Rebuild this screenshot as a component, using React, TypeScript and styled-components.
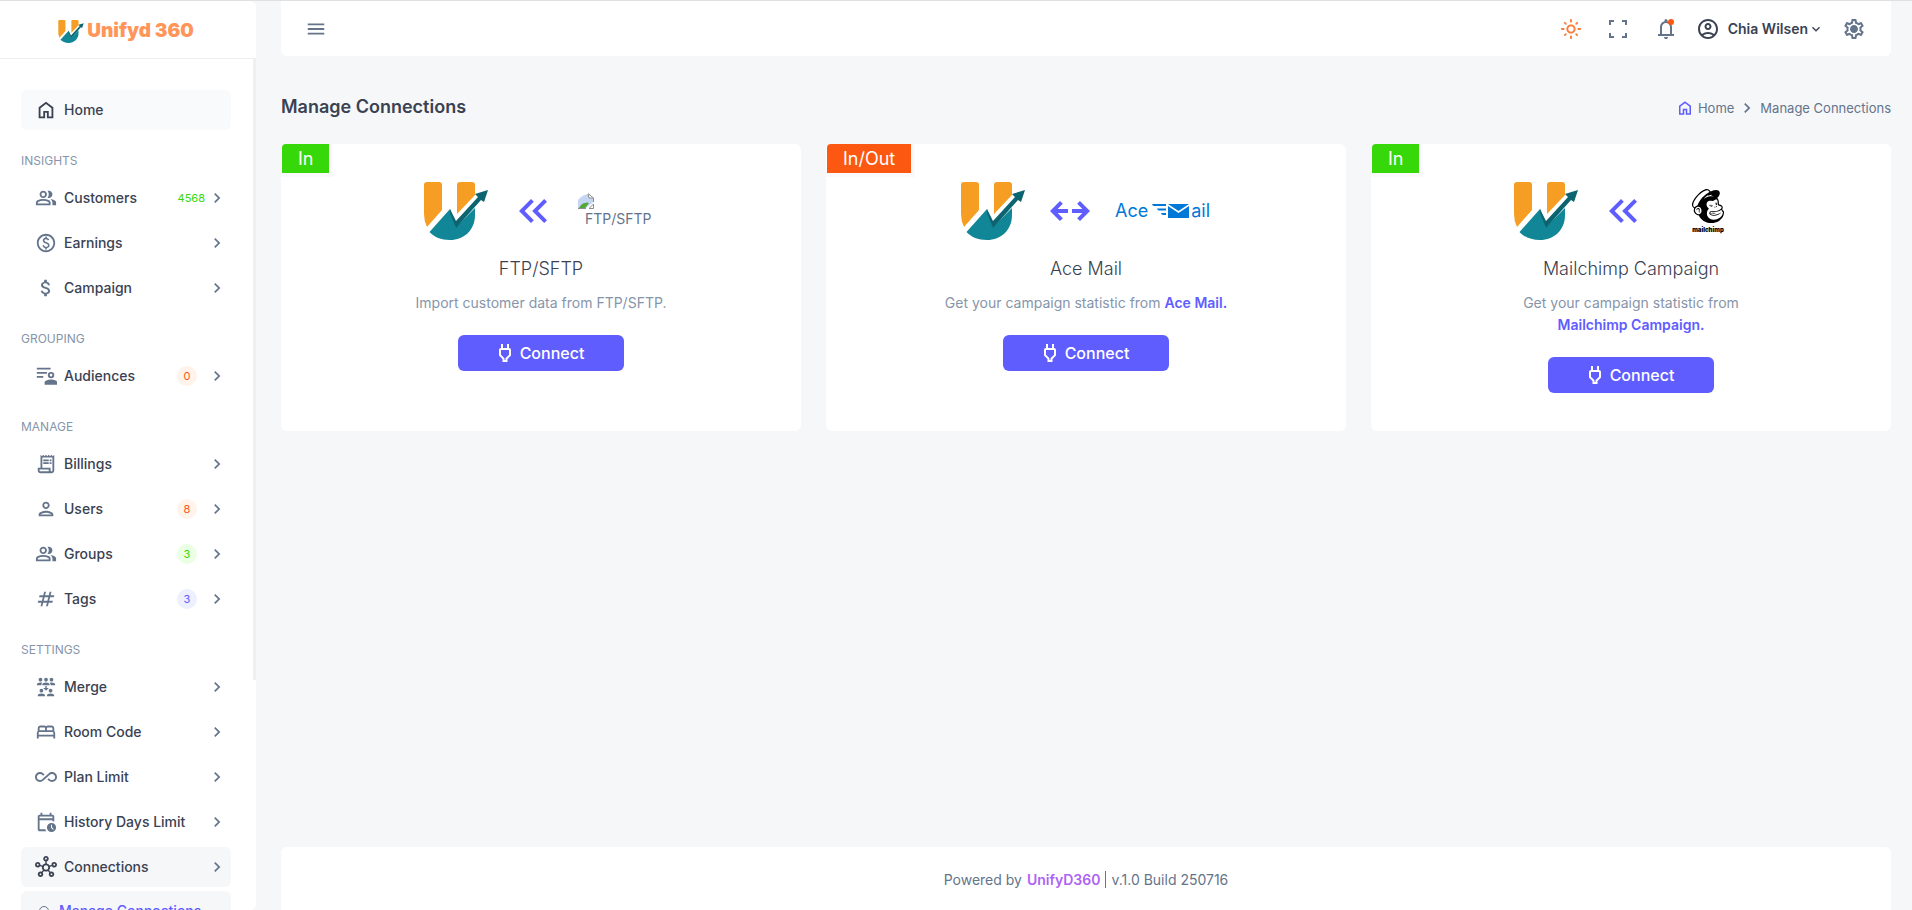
import React from 'react';
import styled, { createGlobalStyle } from 'styled-components';
import {
  MdAllInclusive,
  MdAttachMoney,
  MdChevronRight,
  MdKeyboardArrowDown,
  MdKeyboardDoubleArrowLeft,
  MdMenu,
  MdNumbers,
  MdOutlineAccountCircle,
  MdOutlineBed,
  MdOutlineHub,
  MdOutlineLightMode,
  MdOutlinePaid,
  MdOutlinePerson,
  MdOutlinePower,
  MdOutlineReceiptLong,
  MdOutlineSettings,
  MdReduceCapacity,
} from 'react-icons/md';
import { SiMailchimp } from 'react-icons/si';

const color = {
  ink: '#3a4252',
  body: '#64748b',
  muted: '#8695aa',
  page: '#f6f7f9',
  line: '#eceef2',
  primary: '#605dff',
  green: '#37d80a',
  orange: '#fd5812',
  purple: '#ad63f6',
};

const GlobalStyle = createGlobalStyle`
  *, *::before, *::after { box-sizing: border-box; }
  body {
    margin: 0;
    background: ${color.page};
    color: ${color.body};
    font-family: Inter, "Liberation Sans", sans-serif;
    font-size: 14px;
    line-height: 22px;
  }
  a { color: inherit; text-decoration: none; }
  button { font: inherit; color: inherit; border: 0; background: none; padding: 0; cursor: pointer; }
  h1, h2, p, ul, ol { margin: 0; padding: 0; }
  ul, ol { list-style: none; }
  svg { display: block; flex: none; }
`;

const Page = styled.div`
  display: grid;
  grid-template-columns: 256px minmax(0, 1fr);
  height: 100vh;
  overflow: hidden;
  border-top: 1px solid #dfe0e2;
`;

const Sidebar = styled.aside`
  display: flex;
  flex-direction: column;
  min-height: 0;
  background: #fff;
  border-radius: 0 6px 6px 0;
`;

const Brand = styled.a`
  display: flex;
  align-items: center;
  justify-content: center;
  gap: 3px;
  flex: none;
  height: 58px;
  padding-top: 3px;
  padding-right: 4px;
  border-bottom: 1px solid ${color.line};
`;

const BrandName = styled.span`
  color: #ff9558;
  font-size: 19px;
  font-weight: 900;
`;

const NavArea = styled.div`
  position: relative;
  flex: 1;
  min-height: 0;
  overflow: hidden;
`;

const ScrollThumb = styled.div`
  position: absolute;
  top: 0;
  right: 0;
  width: 3px;
  height: 73%;
  background: #eff0f2;
`;

const Nav = styled.nav`
  padding: 31px 25px 0 21px;
`;

const NavList = styled.ul`
  display: flex;
  flex-direction: column;
  gap: 5px;
`;

const NavHeading = styled.h2`
  margin: 22px 0 8px;
  color: ${color.muted};
  font-size: 12px;
  line-height: 18px;
  font-weight: 400;
  text-transform: uppercase;
`;

const NavLink = styled.a<{ $fill?: string }>`
  display: flex;
  align-items: center;
  height: 40px;
  padding: 0 4px 0 14px;
  border-radius: 6px;
  background: ${(p) => p.$fill ?? 'transparent'};
  color: ${color.ink};
  font-weight: 500;
`;

const NavIcon = styled.span<{ $dark?: boolean }>`
  display: flex;
  width: 22px;
  margin-right: 7px;
  color: ${(p) => (p.$dark ? color.ink : color.body)};
`;

const NavLabel = styled.span`
  flex: 1;
`;

const Badge = styled.span<{ $tone: string; $tint: string }>`
  min-width: 20px;
  height: 20px;
  margin-right: 10px;
  border-radius: 10px;
  background: ${(p) => p.$tint};
  color: ${(p) => p.$tone};
  font-size: 11px;
  line-height: 20px;
  font-weight: 400;
  text-align: center;
`;

const WideBadge = styled(Badge)`
  margin-right: 2px;
`;

const SubLink = styled(NavLink)`
  padding-left: 18px;
  margin-top: 4px;
  color: ${color.primary};
`;

const Bullet = styled.span`
  width: 10px;
  height: 10px;
  margin-right: 10px;
  border: 1px solid ${color.body};
  border-radius: 50%;
`;

const Content = styled.div`
  display: flex;
  flex-direction: column;
  min-height: 0;
  padding: 0 21px 0 25px;
`;

const TopBar = styled.header`
  display: flex;
  align-items: center;
  justify-content: space-between;
  height: 55px;
  padding: 0 25px 0 24px;
  background: #fff;
  border-radius: 0 0 6px 6px;
`;

const TopActions = styled.div`
  display: flex;
  align-items: center;
  gap: 18px;
`;

const TopIcons = styled.div`
  display: flex;
  align-items: center;
  gap: 24px;
`;

const IconButton = styled.button<{ $tone?: string }>`
  position: relative;
  display: flex;
  color: ${(p) => p.$tone ?? color.body};
`;

const Dot = styled.span`
  position: absolute;
  top: 2px;
  right: 4px;
  width: 6px;
  height: 6px;
  border-radius: 50%;
  background: ${color.orange};
`;

const Profile = styled.button`
  display: flex;
  align-items: center;
  color: ${color.ink};
  font-weight: 600;
`;

const ProfileName = styled.span`
  margin-left: 8px;
`;

const PageHead = styled.div`
  display: flex;
  align-items: center;
  justify-content: space-between;
  margin: 38px 0 24px;
`;

const Title = styled.h1`
  color: ${color.ink};
  font-size: 18px;
  line-height: 26px;
  font-weight: 600;
`;

const Crumbs = styled.ol`
  display: flex;
  align-items: center;
  gap: 3px;
  padding-top: 2px;
  font-size: 13px;
  line-height: 24px;
`;

const HomeCrumb = styled.a`
  display: flex;
  align-items: center;
  gap: 4px;
  & svg { color: ${color.primary}; }
`;

const Crumb = styled.li`
  display: flex;
  align-items: center;
`;

const CardGrid = styled.main`
  display: grid;
  grid-template-columns: repeat(3, minmax(0, 1fr));
  gap: 25px;
`;

const Card = styled.article`
  position: relative;
  display: flex;
  flex-direction: column;
  align-items: center;
  min-height: 287px;
  padding: 38px 25px;
  background: #fff;
  border-radius: 6px;
  text-align: center;
`;

const Ribbon = styled.span<{ $tone: string }>`
  position: absolute;
  top: 0;
  left: 1px;
  padding: 0 16px;
  border-radius: 4px 0 0 0;
  background: ${(p) => p.$tone};
  box-shadow: 0 0 0 4px ${color.page}90;
  clip-path: inset(0 -4px -4px 0);
  color: #fff;
  font-size: 18px;
  line-height: 29px;
`;

const LogoRow = styled.div`
  display: flex;
  align-items: center;
  gap: 21px;
  height: 58px;
  color: ${color.primary};
`;

const CardTitle = styled.h2`
  margin-top: 17px;
  color: ${color.ink};
  font-size: 18px;
  line-height: 24px;
  font-weight: 300;
`;

const CardText = styled.p`
  max-width: 300px;
  margin: 11px 0 21px;
  color: ${color.muted};
`;

const CardLink = styled.a`
  color: ${color.primary};
  font-weight: 600;
  white-space: nowrap;
`;

const ConnectButton = styled.button`
  display: flex;
  align-items: center;
  justify-content: center;
  gap: 3px;
  width: 166px;
  height: 36px;
  padding: 0 5px 0 0;
  border-radius: 6px;
  background: ${color.primary};
  color: #fff;
  font-size: 16px;
  font-weight: 500;
`;

const MissingImage = styled.span`
  position: relative;
  width: 80px;
  height: 36px;
  padding: 17px 0 0 7px;
  color: ${color.body};
  line-height: 18px;
  text-align: left;
  & svg { position: absolute; top: 0; left: 0; }
`;

const AceMark = styled.span`
  display: flex;
  align-items: center;
  gap: 2px;
  width: 96px;
  color: #0078d7;
  font-size: 18px;
  & svg { margin-left: 2px; }
`;

const MailchimpMark = styled.span`
  display: flex;
  flex-direction: column;
  align-items: center;
  gap: 3px;
  width: 80px;
  color: #000;
  font-size: 6px;
  line-height: 8px;
  font-weight: 900;
`;

const Footer = styled.footer`
  display: flex;
  align-items: center;
  justify-content: center;
  gap: 5px;
  height: 63px;
  margin-top: auto;
  padding-top: 2px;
  background: #fff;
  border-radius: 6px 6px 0 0;
`;

const FooterLink = styled.a`
  color: ${color.purple};
  font-weight: 600;
`;

const FooterRule = styled.span`
  width: 1px;
  height: 17px;
  background: ${color.body};
`;

const Symbol = ({ d, size = 22 }: { d: string; size?: number }) => (
  <svg width={size} height={size} viewBox="0 -960 960 960" fill="currentColor" aria-hidden="true">
    <path d={d} />
  </svg>
);

const paths = {
  home: 'M240-200h120v-240h240v240h120v-360L480-740 240-560v360Zm-80 80v-480l320-240 320 240v480H520v-240h-80v240H160Z',
  group:
    'M40-160v-112q0-34 17.5-62.5T104-378q62-31 126-46.5T360-440q66 0 130 15.5T616-378q29 15 46.5 43.5T680-272v112H40Zm720 0v-120q0-44-24.5-84.5T666-434q51 6 96 20.5t84 35.5q36 20 55 44.5t19 53.5v120H760ZM360-480q-66 0-113-47t-47-113q0-66 47-113t113-47q66 0 113 47t47 113q0 66-47 113t-113 47Zm400-160q0 66-47 113t-113 47q-11 0-28-2.5t-28-5.5q27-32 41.5-71t14.5-81q0-42-14.5-81T544-792q14-5 28-6.5t28-1.5q66 0 113 47t47 113ZM120-240h480v-32q0-11-5.5-20T580-306q-54-27-109-40.5T360-360q-56 0-111 13.5T140-306q-9 5-14.5 14t-5.5 20v32Zm240-320q33 0 56.5-23.5T440-640q0-33-23.5-56.5T360-720q-33 0-56.5 23.5T280-640q0 33 23.5 56.5T360-560Z',
  bell: 'M160-200v-80h80v-280q0-83 50-147.500T420-792v-28q0-25 17.500-42.500T480-880t42.500 17.500T540-820v28q80 20 130 84.500T720-560v280h80v80H160Zm320 120q-33 0-56.500-23.500T400-160h160q0 33-23.500 56.500T480-80ZM320-280h320v-280q0-66-47-113t-113-47q-66 0-113 47t-47 113v280Z',
  calendarClock:
    'M200-640h560v-80H200v80Zm0 0v-80 80Zm0 560q-33 0-56.5-23.5T120-160v-560q0-33 23.5-56.5T200-800h40v-80h80v80h320v-80h80v80h40q33 0 56.5 23.5T840-720v227q-19-9-39-15t-41-9v-43H200v400h252q7 22 16.5 42T491-80H200Zm520 40q-83 0-141.5-58.5T520-240q0-83 58.5-141.5T720-440q83 0 141.5 58.5T920-240q0 83-58.5 141.5T720-40Zm67-105 28-28-75-75v-112h-40v128l87 87Z',
  fullscreen:
    'M120-120v-200h80v120h120v80H120Zm520 0v-80h120v-120h80v200H640ZM120-640v-200h200v80H200v120h-80Zm640 0v-120H640v-80h200v200h-80Z',
  arrowRange:
    'M280-280 80-480l200-200 56 57-103 103h207v80H233l103 103-56 57Zm400 0-56-57 103-103H520v-80h207L624-623l56-57 200 200-200 200Z',
};

const AudienceIcon = () => (
  <svg width="22" height="22" viewBox="0 0 24 24" fill="currentColor" aria-hidden="true">
    <path d="M2 3h15v2H2zM2 7.500h11v2H2zM2 12h7v2H2z" />
    <path
      fillRule="evenodd"
      d="M17.500 7.500a3.500 3.500 0 1 0 0 7 3.500 3.500 0 0 0 0-7Zm0 2a1.500 1.500 0 1 1 0 3 1.500 1.500 0 0 1 0-3Z"
    />
    <path d="M10.500 21.500v-2.300c0-.9.500-1.700 1.300-2.100a13 13 0 0 1 11.400 0c.5.300.8.900.8 1.600v2.800Z" />
  </svg>
);

const GearIcon = () => (
  <svg width="24" height="24" viewBox="0 0 24 24" fill="currentColor" aria-hidden="true">
    <MdOutlineSettings size={24} />
    <circle cx="12" cy="12" r="3" />
  </svg>
);

const UnifydMark = ({ width, height }: { width: number; height: number }) => (
  <svg width={width} height={height} viewBox="0 0 64 58" aria-hidden="true">
    <path d="M3 0h12q3 0 3 3v25L3 45Q0 39 0 32V3q0-3 3-3Z" fill="#f59e23" />
    <path d="M36 0h12q3 0 3 3v10L33 32V3q0-3 3-3Z" fill="#f59e23" />
    <path d="M5.500 50 26 27l6 18L51 26v7c0 15-11 25-25 25-9 0-16-3-20.500-8Z" fill="#118697" />
    <path d="m26 27 6 12 22-24-3-3 13-4-4 12-3-2-25 28-6-15Z" fill="#0b6470" />
  </svg>
);

const BrokenImageIcon = () => (
  <svg width="16" height="16" viewBox="0 0 16 16" aria-hidden="true">
    <path d="M0 15V7q4-5 10-6l1 4h4.500v4L8 15Z" fill="#c5d6f3" />
    <path d="M1 15q4-7 9-4l-3 4Z" fill="#57a639" />
    <path d="M3 15q4-7 8-5l-4 5Z" fill="#57a639" />
    <path d="M10 .500 15.500 5v4M10 1l1 4h4.500M0 15.500h8M11 15.500h4.500V11l-4 4" fill="none" stroke="#8d8d8d" />
  </svg>
);

const AceEnvelope = () => (
  <svg width="37" height="16" viewBox="0 0 37 16" fill="#0078d7" aria-hidden="true">
    <path d="M0 1h14v2H2q-1.500 0-2-2ZM5 5.500h9v2H7q-1.500 0-2-2ZM9 10h5v2h-3q-1.500 0-2-2Z" />
    <path d="M16 1h21l-10.500 7ZM16 3l10.500 7L37 3v12H16Z" />
  </svg>
);

type Item = {
  label: string;
  icon: React.ReactNode;
  badge?: { text: string; tone: string; tint: string };
  active?: boolean;
};

const sections: { heading: string; items: Item[] }[] = [
  {
    heading: 'Insights',
    items: [
      { label: 'Customers', icon: <Symbol d={paths.group} />, badge: { text: '4568', tone: color.green, tint: 'transparent' } },
      { label: 'Earnings', icon: <MdOutlinePaid size={22} /> },
      { label: 'Campaign', icon: <MdAttachMoney size={22} /> },
    ],
  },
  {
    heading: 'Grouping',
    items: [{ label: 'Audiences', icon: <AudienceIcon />, badge: { text: '0', tone: color.orange, tint: '#fff3ec' } }],
  },
  {
    heading: 'Manage',
    items: [
      { label: 'Billings', icon: <MdOutlineReceiptLong size={22} /> },
      { label: 'Users', icon: <MdOutlinePerson size={22} />, badge: { text: '8', tone: color.orange, tint: '#fff3ec' } },
      { label: 'Groups', icon: <Symbol d={paths.group} />, badge: { text: '3', tone: color.green, tint: '#eaffe3' } },
      { label: 'Tags', icon: <MdNumbers size={22} />, badge: { text: '3', tone: color.primary, tint: '#ecf0ff' } },
    ],
  },
  {
    heading: 'Settings',
    items: [
      { label: 'Merge', icon: <MdReduceCapacity size={22} /> },
      { label: 'Room Code', icon: <MdOutlineBed size={22} /> },
      { label: 'Plan Limit', icon: <MdAllInclusive size={22} /> },
      { label: 'History Days Limit', icon: <Symbol d={paths.calendarClock} /> },
      { label: 'Connections', icon: <MdOutlineHub size={22} />, active: true },
    ],
  },
];

const NavItem = ({ label, icon, badge, active }: Item) => {
  const BadgeShape = badge && badge.text.length > 1 ? WideBadge : Badge;
  return (
    <li>
      <NavLink href="#" $fill={active ? color.page : undefined}>
        <NavIcon $dark={active}>{icon}</NavIcon>
        <NavLabel>{label}</NavLabel>
        {badge && (
          <BadgeShape $tone={badge.tone} $tint={badge.tint}>
            {badge.text}
          </BadgeShape>
        )}
        <MdChevronRight size={20} color={color.body} />
      </NavLink>
      {active && (
        <SubLink href="#" $fill={color.page}>
          <Bullet />
          <NavLabel>Manage Connections</NavLabel>
        </SubLink>
      )}
    </li>
  );
};

type Connection = {
  title: string;
  ribbon: string;
  tone: string;
  arrow: React.ReactNode;
  logo: React.ReactNode;
  text: React.ReactNode;
};

const connections: Connection[] = [
  {
    title: 'FTP/SFTP',
    ribbon: 'In',
    tone: color.green,
    arrow: <MdKeyboardDoubleArrowLeft size={48} />,
    logo: (
      <MissingImage>
        <BrokenImageIcon />
        FTP/SFTP
      </MissingImage>
    ),
    text: 'Import customer data from FTP/SFTP.',
  },
  {
    title: 'Ace Mail',
    ribbon: 'In/Out',
    tone: color.orange,
    arrow: <Symbol d={paths.arrowRange} size={48} />,
    logo: (
      <AceMark>
        Ace
        <AceEnvelope />
        ail
      </AceMark>
    ),
    text: (
      <>
        Get your campaign statistic from <CardLink href="#">Ace Mail.</CardLink>
      </>
    ),
  },
  {
    title: 'Mailchimp Campaign',
    ribbon: 'In',
    tone: color.green,
    arrow: <MdKeyboardDoubleArrowLeft size={48} />,
    logo: (
      <MailchimpMark>
        <SiMailchimp size={34} />
        mailchimp
      </MailchimpMark>
    ),
    text: (
      <>
        Get your campaign statistic from <CardLink href="#">Mailchimp Campaign.</CardLink>
      </>
    ),
  },
];

export default function App() {
  return (
    <>
      <GlobalStyle />
      <Page>
        <Sidebar>
          <Brand href="#">
            <UnifydMark width={26} height={23} />
            <BrandName>Unifyd 360</BrandName>
          </Brand>
          <NavArea>
            <Nav aria-label="Main">
              <NavList>
                <li>
                  <NavLink href="#" $fill="#f9fafc">
                    <NavIcon $dark>
                      <Symbol d={paths.home} />
                    </NavIcon>
                    <NavLabel>Home</NavLabel>
                  </NavLink>
                </li>
              </NavList>
              {sections.map((section) => (
                <section key={section.heading}>
                  <NavHeading>{section.heading}</NavHeading>
                  <NavList>
                    {section.items.map((item) => (
                      <NavItem key={item.label} {...item} />
                    ))}
                  </NavList>
                </section>
              ))}
            </Nav>
            <ScrollThumb />
          </NavArea>
        </Sidebar>

        <Content>
          <TopBar>
            <IconButton aria-label="Toggle menu">
              <MdMenu size={22} />
            </IconButton>
            <TopActions>
              <TopIcons>
                <IconButton aria-label="Light mode" $tone="#fe7a36">
                  <MdOutlineLightMode size={22} />
                </IconButton>
                <IconButton aria-label="Full screen">
                  <Symbol d={paths.fullscreen} size={24} />
                </IconButton>
                <IconButton aria-label="Notifications">
                  <Symbol d={paths.bell} size={24} />
                  <Dot />
                </IconButton>
              </TopIcons>
              <Profile>
                <MdOutlineAccountCircle size={24} />
                <ProfileName>Chia Wilsen</ProfileName>
                <MdKeyboardArrowDown size={16} />
              </Profile>
              <IconButton aria-label="Settings">
                <GearIcon />
              </IconButton>
            </TopActions>
          </TopBar>

          <PageHead>
            <Title>Manage Connections</Title>
            <Crumbs>
              <Crumb>
                <HomeCrumb href="#">
                  <Symbol d={paths.home} size={18} />
                  Home
                </HomeCrumb>
              </Crumb>
              <Crumb>
                <MdChevronRight size={20} />
              </Crumb>
              <Crumb>Manage Connections</Crumb>
            </Crumbs>
          </PageHead>

          <CardGrid>
            {connections.map((c) => (
              <Card key={c.title}>
                <Ribbon $tone={c.tone}>{c.ribbon}</Ribbon>
                <LogoRow>
                  <UnifydMark width={64} height={58} />
                  {c.arrow}
                  {c.logo}
                </LogoRow>
                <CardTitle>{c.title}</CardTitle>
                <CardText>{c.text}</CardText>
                <ConnectButton>
                  <MdOutlinePower size={24} />
                  Connect
                </ConnectButton>
              </Card>
            ))}
          </CardGrid>

          <Footer>
            <span>Powered by</span>
            <FooterLink href="#">UnifyD360</FooterLink>
            <FooterRule />
            <span>v.1.0 Build 250716</span>
          </Footer>
        </Content>
      </Page>
    </>
  );
}
